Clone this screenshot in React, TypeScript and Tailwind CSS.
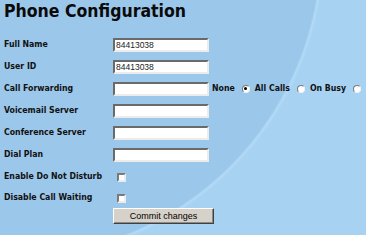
import React from 'react';

const bold = "font-['DejaVu_Sans_Condensed','DejaVu_Sans',sans-serif] font-bold";

function TextBox({ value = '' }: { value?: string }) {
  return (
    <div className="w-[96px] h-[14px] bg-white border-2 border-t-[#6a6a6a] border-l-[#6a6a6a] border-r-[#ececec] border-b-[#ececec] flex items-center pl-[1px] font-['Liberation_Sans',Arial,sans-serif] text-[8.5px] text-[#222]">
      {value}
    </div>
  );
}

function Radio({ checked = false }: { checked?: boolean }) {
  return (
    <span className="w-[8px] h-[8px] rounded-full bg-white border border-t-[#7a7a7a] border-l-[#7a7a7a] border-r-[#f2f2f2] border-b-[#f2f2f2] flex items-center justify-center">
      {checked && <span className="w-[3px] h-[3px] rounded-full bg-black" />}
    </span>
  );
}

function CheckBox() {
  return (
    <span className="ml-[4px] w-[9px] h-[9px] bg-white border-2 border-t-[#7a7a7a] border-l-[#7a7a7a] border-r-[#ececec] border-b-[#ececec]" />
  );
}

function Row({ label, children, h = 'h-[22px]' }: { label: string; children?: React.ReactNode; h?: string }) {
  return (
    <div className={`flex items-center ${h}`}>
      <div className={`w-[113px] pl-1 text-[8.7px] text-[#111] ${bold}`}>{label}</div>
      {children}
    </div>
  );
}

export default function App() {
  return (
    <div className="w-[366px] h-[235px] overflow-hidden bg-[radial-gradient(circle_311px_at_11px_-53px,#9bc7ea_309px,#b3daf6_311px,#a7d2f2_314px)]">
      <h1 className={`h-[34px] pl-1 pt-[3px] text-[17.5px] leading-none text-[#0a0a0a] ${bold}`}>
        Phone Configuration
      </h1>
      <Row label="Full Name">
        <TextBox value="84413038" />
      </Row>
      <Row label="User ID">
        <TextBox value="84413038" />
      </Row>
      <Row label="Call Forwarding">
        <TextBox />
        <div className={`flex items-center ml-[3px] text-[8.7px] text-[#111] ${bold}`}>
          <span>None</span>
          <span className="ml-[7px]"><Radio checked /></span>
          <span className="ml-[5px]">All Calls</span>
          <span className="ml-[7px]"><Radio /></span>
          <span className="ml-[5px]">On Busy</span>
          <span className="ml-[7px]"><Radio /></span>
        </div>
      </Row>
      <Row label="Voicemail Server">
        <TextBox />
      </Row>
      <Row label="Conference Server">
        <TextBox />
      </Row>
      <Row label="Dial Plan">
        <TextBox />
      </Row>
      <Row label="Enable Do Not Disturb">
        <CheckBox />
      </Row>
      <Row label="Disable Call Waiting" h="h-[20px]">
        <CheckBox />
      </Row>
      <div className="flex pl-[113px]">
        <button className="w-[101px] h-[16px] bg-[#d6d2ca] border border-t-white border-l-white border-r-[#404040] border-b-[#404040] shadow-[inset_-1px_-1px_0_#8a8a8a] font-['Liberation_Sans',Arial,sans-serif] text-[9px] text-black leading-none">
          Commit changes
        </button>
      </div>
    </div>
  );
}
